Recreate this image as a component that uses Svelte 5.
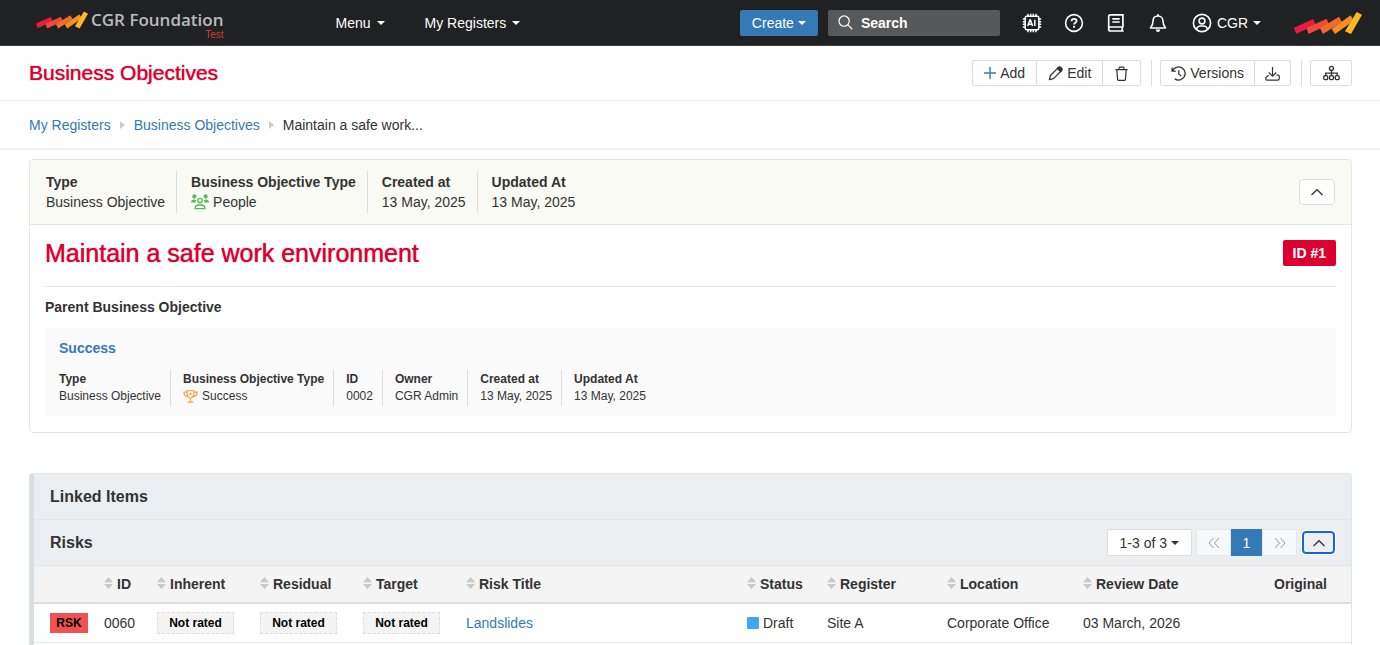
<script lang="ts">
	let search = $state('');
	let detailsOpen = $state(true);
	let risksOpen = $state(true);

	const summary = [
		{ label: 'Type', value: 'Business Objective' },
		{ label: 'Business Objective Type', value: 'People', icon: 'people' },
		{ label: 'Created at', value: '13 May, 2025' },
		{ label: 'Updated At', value: '13 May, 2025' }
	];

	const parent = [
		{ label: 'Type', value: 'Business Objective' },
		{ label: 'Business Objective Type', value: 'Success', icon: 'trophy' },
		{ label: 'ID', value: '0002' },
		{ label: 'Owner', value: 'CGR Admin' },
		{ label: 'Created at', value: '13 May, 2025' },
		{ label: 'Updated At', value: '13 May, 2025' }
	];

	const columns = [
		{ key: 'id', label: 'ID' },
		{ key: 'inherent', label: 'Inherent' },
		{ key: 'residual', label: 'Residual' },
		{ key: 'target', label: 'Target' },
		{ key: 'title', label: 'Risk Title' },
		{ key: 'status', label: 'Status' },
		{ key: 'register', label: 'Register' },
		{ key: 'location', label: 'Location' },
		{ key: 'review', label: 'Review Date' }
	];

	const risks = [
		{ id: '0060', inherent: 'Not rated', residual: 'Not rated', target: 'Not rated', title: 'Landslides', status: 'Draft', register: 'Site A', location: 'Corporate Office', review: '03 March, 2026' }
	];
</script>

{#snippet brandMark()}
	<svg class="mark" viewBox="0 0 204 66" aria-hidden="true">
		<path fill="#ea1c3e" d="M0 47 58 21l7 17L7 65z" />
		<path fill="#f04a3a" d="M37 48 98 20l7 17-61 29z" />
		<path fill="#f26a2e" d="m78 49 57-35 9 16-57 36z" />
		<path fill="#f7901e" d="m113 51 57-41 9 16-56 40z" />
		<path fill="#fdb924" d="M153 58 188 0l16 8-33 58z" />
	</svg>
{/snippet}

{#snippet chevron()}
	<svg class="chevron" viewBox="0 0 14 8" fill="none" stroke="currentColor" stroke-width="1.3"><path d="m1.500 7 5.500-5.300L12.500 7" /></svg>
{/snippet}

{#snippet facts(items)}
	{#each items as item}
		<div class="fact">
			<dt>{item.label}</dt>
			<dd>
				{#if item.icon === 'people'}
					<svg class="people" viewBox="0 0 18 16" fill="none" stroke="currentColor" stroke-width="1.4">
						<g fill="currentColor" stroke="none">
							<circle cx="3.4" cy="2.4" r="2.1" /><circle cx="14.6" cy="2.4" r="2.1" />
							<path d="M0 8.6C0 6.6 1.4 5.5 3.2 5.5c.8 0 1.4.2 2 .6-.6.8-.8 1.7-.6 2.5zM18 8.6c0-2-1.4-3.1-3.2-3.1-.8 0-1.4.2-2 .6.6.8.8 1.7.6 2.5z" />
						</g>
						<circle cx="9" cy="6.6" r="2.2" />
						<path d="M4.2 14.6c0-2.4 1.7-3.6 3.7-3.6h2.2c2 0 3.7 1.2 3.7 3.6z" />
					</svg>
				{:else if item.icon === 'trophy'}
					<svg class="trophy" viewBox="0 0 16 14" fill="none" stroke="currentColor" stroke-width="1.3">
						<path d="M4.2.8h7.6c0 4.6-1 8-3.8 8s-3.8-3.4-3.8-8zM4.2 2.2H.9c0 3 1.8 5 4.6 5M11.8 2.2h3.3c0 3-1.8 5-4.6 5M8 8.8v3.8M4.8 13h6.4" />
						<path fill="currentColor" stroke="none" d="m8 2.2.6 1.2 1.3.2-1 .9.3 1.3L8 5.2l-1.2.6.3-1.3-1-.9 1.3-.2z" />
					</svg>
				{/if}
				{item.value}
			</dd>
		</div>
	{/each}
{/snippet}

<div class="page">
	<header class="navbar">
		<a class="brand" href="#home">
			{@render brandMark()}
			<span class="brand-text">CGR Foundation<small>Test</small></span>
		</a>
		<nav class="menu">
			<button>Menu <i class="caret"></i></button>
			<button>My Registers <i class="caret"></i></button>
		</nav>
		<div class="tools">
			<button class="create">Create <i class="caret"></i></button>
			<label class="search">
				<svg viewBox="0 0 16 16" fill="none" stroke="currentColor" stroke-width="1.3"><circle cx="6.5" cy="6.5" r="5.5" /><path d="m10.6 10.6 4.6 4.6" /></svg>
				<input type="text" aria-label="Search" placeholder="Search" bind:value={search} />
			</label>
			<div class="icons">
				<button aria-label="AI assistant">
					<svg viewBox="0 0 20 20" fill="none" stroke="currentColor" stroke-width="1.5">
						<rect x="3.2" y="3.2" width="13.6" height="13.6" rx="1.5" />
						<path d="M6 .8v2.4M8.7.8v2.4M11.3.8v2.4M14 .8v2.4M6 16.8v2.4M8.7 16.8v2.4M11.3 16.8v2.4M14 16.8v2.4M.8 6h2.4M.8 8.7h2.4M.8 11.3h2.4M.8 14h2.4M16.8 6h2.4M16.8 8.7h2.4M16.8 11.3h2.4M16.8 14h2.4" />
						<path d="m5.7 13 2.2-6h.5l2.2 6M6.5 11.2h3.4M12.8 6.8V13" />
					</svg>
				</button>
				<button aria-label="Help">
					<svg viewBox="0 0 20 20" fill="none" stroke="currentColor" stroke-width="1.6">
						<circle cx="10" cy="10" r="8.4" />
						<path stroke-width="1.9" d="M7.6 8.3c0-1.5 1-2.4 2.5-2.4s2.4.9 2.4 2.1c0 1.6-2.4 1.8-2.4 3.6" />
						<circle cx="10.1" cy="13.8" r="1.1" fill="currentColor" stroke="none" />
					</svg>
				</button>
				<button aria-label="Documentation">
					<svg viewBox="0 0 20 20" fill="none" stroke="currentColor" stroke-width="1.7">
						<path d="M16.900 14V1.900H4.400c-1 0-1.700.7-1.700 1.700V16M17.600 14H4.500c-1.200 0-1.800.8-1.800 2s.6 2 1.800 2h13.100M16.200 14v4M6.300 5.800h7.400M6.300 9h7.400" />
					</svg>
				</button>
				<button aria-label="Notifications">
					<svg viewBox="0 0 20 20" fill="none" stroke="currentColor" stroke-width="1.6" stroke-linejoin="round">
						<path d="M10 1v2M10 3c-3.200 0-5 2.200-5 5.200 0 3.300-.9 4.700-2.500 6.800h15C15.900 12.900 15 11.500 15 8.200 15 5.200 13.200 3 10 3z" />
						<path fill="currentColor" stroke="none" d="M7.800 16.600h4.400c0 1.400-.9 2.400-2.200 2.400s-2.200-1-2.200-2.400z" />
					</svg>
				</button>
			</div>
			<button class="user">
				<svg viewBox="0 0 20 20" fill="none" stroke="currentColor" stroke-width="1.6">
					<circle cx="10" cy="10" r="8.600" /><circle cx="10" cy="8" r="2.900" />
					<path d="M4.500 16c.7-2 2.300-3 4-3h3c1.700 0 3.300 1 4 3" />
				</svg>
				CGR <i class="caret"></i>
			</button>
			<a class="corner" href="#home" aria-label="Home">{@render brandMark()}</a>
		</div>
	</header>

	<div class="titlebar">
		<h1>Business Objectives</h1>
		<div class="actions">
			<div class="group">
				<button>
					<svg class="plus" viewBox="0 0 12 12" stroke="currentColor" stroke-width="1.4"><path d="M6 0v12M0 6h12" /></svg>
					Add
				</button>
				<button>
					<svg viewBox="0 0 16 16" fill="none" stroke="currentColor" stroke-width="1.4" stroke-linejoin="round">
						<path d="m1.500 14.500 1-4.300L10.700 2l3.300 3.300-8.200 8.200z" />
						<path fill="currentColor" d="m10 2.700 1.300-1.400c.6-.6 1.500-.6 2.100 0l1.300 1.300c.6.6.6 1.500 0 2.100L13.300 6z" />
					</svg>
					Edit
				</button>
				<button aria-label="Delete">
					<svg viewBox="0 0 16 16" fill="none" stroke="currentColor" stroke-width="1.3"><path d="M1.500 3.800h13M3 3.800l.8 10.400c.1.700.6 1.100 1.200 1.100h6c.6 0 1.100-.4 1.200-1.100L13 3.800M5 3.600 6 1.200h4l1 2.400" /></svg>
				</button>
			</div>
			<div class="group">
				<button>
					<svg viewBox="0 0 16 16" fill="none" stroke="currentColor" stroke-width="1.4"><path d="M1.200 1.500v4h4M1.600 5.300A7 7 0 1 1 4 13.700M8.300 4.500v4l2.600 2.300" /></svg>
					Versions
				</button>
				<button aria-label="Download">
					<svg viewBox="0 0 16 16" fill="none" stroke="currentColor" stroke-width="1.3"><path d="M8 1v9.500M4 7l4 3.800L12 7M3.800 9.800 1.200 12c-.4.300-.4.600-.4 1v.7c0 .9.500 1.400 1.400 1.400h11.600c.9 0 1.400-.5 1.400-1.400V11c0-.8-.5-1.200-1.300-1.200h-1.700" /></svg>
				</button>
			</div>
			<div class="group">
				<button aria-label="Hierarchy">
					<svg viewBox="0 0 16 16" fill="none" stroke="currentColor" stroke-width="1.3"><circle cx="8" cy="3.200" r="1.900" /><path d="M8 5.100V10M2.600 10V7.600h10.800V10" /><rect x=".8" y="10" width="3.600" height="3.800" rx="1" /><rect x="6.200" y="10" width="3.600" height="3.800" rx="1" /><rect x="11.600" y="10" width="3.600" height="3.800" rx="1" /></svg>
				</button>
			</div>
		</div>
	</div>

	<nav class="crumbs" aria-label="Breadcrumb">
		<a href="#registers">My Registers</a>
		<i class="sep"></i>
		<a href="#objectives">Business Objectives</a>
		<i class="sep"></i>
		<span>Maintain a safe work...</span>
	</nav>

	<main>
		<section class="card">
			<div class="card-head">
				<dl class="facts">{@render facts(summary)}</dl>
				<button class="toggle" aria-label="Toggle details" onclick={() => (detailsOpen = !detailsOpen)}>{@render chevron()}</button>
			</div>
			{#if detailsOpen}
				<div class="card-body">
					<div class="heading">
						<h2>Maintain a safe work environment</h2>
						<span class="id-badge">ID #1</span>
					</div>
					<h3>Parent Business Objective</h3>
					<div class="parent">
						<a href="#success">Success</a>
						<dl class="facts small">{@render facts(parent)}</dl>
					</div>
				</div>
			{/if}
		</section>

		<section class="linked">
			<h3>Linked Items</h3>
			<div class="risks-head">
				<h3>Risks</h3>
				<button class="range">1-3 of 3 <i class="caret"></i></button>
				<div class="pager">
					<button aria-label="Previous page"><svg viewBox="0 0 12 12" fill="none" stroke="currentColor"><path d="M5.500 1 1 6l4.500 5M11 1 6.500 6l4.500 5" /></svg></button>
					<button class="current">1</button>
					<button aria-label="Next page"><svg viewBox="0 0 12 12" fill="none" stroke="currentColor"><path d="M6.500 1 11 6l-4.500 5M1 1l4.500 5L1 11" /></svg></button>
				</div>
				<button class="toggle focused" aria-label="Toggle risks" onclick={() => (risksOpen = !risksOpen)}>{@render chevron()}</button>
			</div>
			{#if risksOpen}
				<table>
					<colgroup>
						<col class="c-tag" />
						{#each columns as col}<col class="c-{col.key}" />{/each}
						<col class="c-original" />
					</colgroup>
					<thead>
						<tr>
							<th></th>
							{#each columns as col}
								<th>
									<svg class="sort" viewBox="0 0 9 12" fill="currentColor"><path d="M4.500 0 9 5.300H0zM4.500 12 0 6.900h9z" /></svg>{col.label}
								</th>
							{/each}
							<th>Original</th>
						</tr>
					</thead>
					<tbody>
						{#each risks as risk}
							<tr>
								<td><span class="tag">RSK</span></td>
								<td>{risk.id}</td>
								<td><span class="rating">{risk.inherent}</span></td>
								<td><span class="rating">{risk.residual}</span></td>
								<td><span class="rating">{risk.target}</span></td>
								<td><a href="#risk">{risk.title}</a></td>
								<td><span class="status">{risk.status}</span></td>
								<td>{risk.register}</td>
								<td>{risk.location}</td>
								<td>{risk.review}</td>
								<td></td>
							</tr>
						{/each}
					</tbody>
				</table>
			{/if}
		</section>
	</main>
</div>

<style>
	:global(body) { background: #fff; }
	.page { display: flex; flex-direction: column; min-height: 100vh; font: 14px/20px "Liberation Sans", Arial, sans-serif; color: #333; }
	.page * { box-sizing: border-box; }
	button, input { font: inherit; color: inherit; margin: 0; padding: 0; border: 0; background: none; }
	button { display: inline-flex; align-items: center; justify-content: center; cursor: pointer; white-space: nowrap; }
	a { color: #337ab7; text-decoration: none; }
	h1, h2, h3, dl, dd { margin: 0; }
	svg { display: block; flex: none; }
	.caret { width: 0; height: 0; border: 4px solid transparent; border-top-color: currentColor; border-bottom: 0; }

	.navbar { display: flex; align-items: center; height: 46px; padding: 0 18px 0 36px; background: #202123; border-bottom: 1px solid #3c3e40; color: #fff; }
	.brand { display: flex; align-items: flex-start; gap: 3px; padding-top: 6px; }
	.mark { width: 68px; height: 22px; }
	.brand .mark { width: 52px; height: 18px; }
	.brand-text { display: flex; flex-direction: column; font: 600 17px/18px "Open Sans", sans-serif; color: #b9bcbf; white-space: nowrap; }
	.brand-text small { align-self: flex-end; font: 10px/12px "Liberation Sans", sans-serif; color: #d23b36; }
	.menu { display: flex; gap: 40px; margin-left: 112px; }
	.menu button { gap: 6px; }
	.tools { display: flex; align-items: center; margin-left: auto; }
	.create { width: 78px; height: 26px; gap: 4px; background: #337ab7; border-radius: 2px; }
	.search { display: flex; align-items: center; gap: 8px; width: 172px; height: 26px; margin-left: 10px; padding: 0 10px; background: #57585a; border-radius: 2px; }
	.search svg { width: 15px; height: 15px; }
	.search input { width: 100%; min-width: 0; outline: none; font-weight: bold; }
	.search input::placeholder { color: #fff; opacity: 1; }
	.icons { display: flex; gap: 22px; margin: 0 24px 0 22px; }
	.icons svg, .user svg { width: 20px; height: 20px; }
	.user { gap: 5px; }
	.corner { margin-left: 33px; }

	.titlebar { display: flex; align-items: center; justify-content: space-between; height: 55px; padding: 0 28px 0 29px; border-bottom: 1px solid #eee; }
	h1 { font-size: 21px; line-height: 24px; font-weight: normal; color: #dc0031; text-shadow: 0 0 1px currentColor; }
	.actions { display: flex; }
	.group { display: flex; }
	.group + .group { margin-left: 10px; padding-left: 8px; border-left: 1px solid #ddd; }
	.group button { height: 26px; gap: 4px; padding: 0 10px; border: 1px solid #ddd; border-left-width: 0; background: #fff; }
	.group:first-child button { padding: 0 11px; }
	.group button:first-child { border-left-width: 1px; border-radius: 2px 0 0 2px; }
	.group button:last-child { border-radius: 0 2px 2px 0; }
	.group svg { width: 15px; height: 15px; }
	.group .plus { width: 12px; height: 12px; color: #337ab7; }
	.group:last-child button { width: 42px; border-radius: 2px; }
	.group:last-child svg { width: 17px; height: 17px; }

	.crumbs { display: flex; align-items: center; gap: 9px; height: 49px; padding: 0 29px; border-bottom: 2px solid #f0f0f0; }
	.sep { width: 0; height: 0; border: 4px solid transparent; border-left: 5px solid #ccc; border-right: 0; }

	main { flex: 1; display: flex; flex-direction: column; gap: 40px; padding: 9px 28px 0 29px; }
	.card { border: 1px solid #e7e7e7; border-radius: 4px; overflow: hidden; }
	.card-head { display: flex; align-items: center; justify-content: space-between; padding: 11px 16px; background: #f9faf4; border-bottom: 1px solid #e7e7e7; }
	.facts { display: flex; }
	.fact { padding: 1px 11px 1px 14px; border-right: 1px solid #ddd; }
	.fact:first-child { padding-left: 0; }
	.fact:last-child { border-right: 0; }
	dt { font-weight: bold; }
	dd { display: flex; align-items: center; gap: 4px; }
	.small { font-size: 12px; line-height: 17px; }
	.small .fact { padding-left: 12px; padding-right: 9px; }
	.small .fact:first-child { padding-left: 0; }
	.people { width: 18px; height: 16px; color: #5cb85c; }
	.trophy { width: 15px; height: 13px; color: #f0a33c; }
	.toggle { width: 36px; height: 26px; border: 1px solid #ddd; border-radius: 4px; background: #fff; }
	.chevron { width: 14px; height: 8px; }
	.card-body { padding: 0 15px 16px; }
	.heading { display: flex; align-items: center; justify-content: space-between; height: 62px; padding-bottom: 5px; border-bottom: 1px solid #e7e7e7; }
	h2 { font-size: 25px; line-height: 30px; font-weight: normal; color: #dc0031; text-shadow: 0 0 1px currentColor; }
	.id-badge { padding: 3px 10px; border-radius: 2px; background: #dc0031; color: #fff; font-weight: bold; }
	.card-body h3 { padding: 10px 0 11px; font-size: 14px; line-height: 20px; }
	.parent { padding: 10px 14px; background: #fafafa; }
	.parent a { font-weight: bold; }
	.parent .facts { margin-top: 12px; }

	.linked { flex: 1; border: 1px solid #e1e5e8; border-left: 5px solid #d8dfe4; border-bottom: 0; border-radius: 4px 4px 0 0; }
	.linked h3 { padding: 0 16px; font-size: 16px; line-height: 45px; background: #ebeff2; }
	.risks-head { display: flex; align-items: center; padding-right: 16px; height: 47px; background: #ebeff2; border-top: 1px solid #e1e5e8; border-bottom: 1px solid #e1e5e8; }
	.risks-head h3 { margin-right: auto; }
	.range { height: 27px; gap: 4px; padding: 0 12px; border: 1px solid #ddd; border-radius: 2px; background: #fff; }
	.pager { display: flex; margin: 0 5px 0 4px; }
	.pager button { width: 35px; height: 27px; border: 1px solid #e6e9ec; background: #f7f8f9; color: #999; }
	.pager svg { width: 12px; height: 12px; }
	.pager .current { width: 31px; border-color: #337ab7; background: #337ab7; color: #fff; }
	.focused { width: 33px; height: 23px; border: 2px solid #1565d8; background: #ebeff2; outline: 1px solid #fff; }

	table { width: 100%; table-layout: fixed; border-collapse: collapse; }
	th, td { padding: 0 0 0 8px; text-align: left; white-space: nowrap; }
	th { height: 37px; background: #f4f4f4; border-bottom: 2px solid #ddd; }
	td { height: 39px; border-bottom: 1px solid #e4e4e4; }
	th:first-child, td:first-child { padding-left: 16px; }
	.sort { display: inline-block; width: 9px; height: 12px; margin-right: 4px; color: #c8c8c8; }
	.c-tag { width: 62px; }
	.c-id { width: 53px; }
	.c-inherent, .c-residual, .c-target { width: 103px; }
	.c-status { width: 80px; }
	.c-register { width: 120px; }
	.c-location { width: 136px; }
	.c-review { width: 191px; }
	.c-original { width: 85px; }
	.tag { display: inline-block; width: 38px; background: #f05252; color: #000; font-size: 12px; font-weight: bold; text-align: center; }
	.rating { display: inline-block; width: 77px; border: 1px dashed #ddd; background: #f4f4f4; color: #000; font-size: 12px; font-weight: bold; text-align: center; }
	.status { display: flex; align-items: center; gap: 4px; }
	.status::before { content: ''; width: 12px; height: 12px; border-radius: 1px; background: #42a5f5; }
</style>
